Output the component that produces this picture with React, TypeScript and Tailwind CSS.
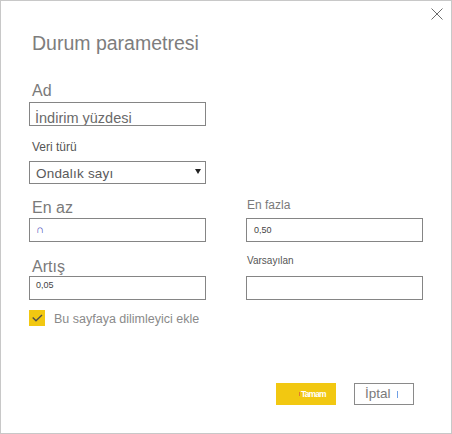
import React from 'react'

const font = "font-['Liberation_Sans',Arial,sans-serif]"

function CloseIcon() {
  return (
    <svg width="12" height="12" viewBox="0 0 12 12" fill="none" stroke="#6b6b6b" strokeWidth={1}>
      <path d="M0.5 0.5 L11.5 11.5 M11.5 0.5 L0.5 11.5" />
    </svg>
  )
}

function TextBox({ children, pad = 'pt-[6px]' }: { children?: React.ReactNode; pad?: string }) {
  return (
    <div className={`h-[24px] w-[177px] overflow-hidden border border-[#858585] bg-white pl-[6px] ${pad}`}>
      {children}
    </div>
  )
}

export default function App() {
  return (
    <div className={`relative h-[434px] w-[452px] border border-[#c8c8c8] bg-white pl-[28px] pt-[32px] ${font}`}>
      <button className="absolute right-[8px] top-[7px]">
        <CloseIcon />
      </button>

      <h1 className="pl-[3px] text-[19.5px] leading-[20px] text-[#7d7d7d]">Durum parametresi</h1>

      {/* Ad */}
      <div className="mt-[30px] pl-[3px] text-[16px] leading-[16px] text-[#7a7a7a]">Ad</div>
      <div className="mt-[3px] h-[24px] w-[177px] overflow-hidden border border-[#858585] pl-[5px] pt-[8px]">
        <span className="block text-[14.5px] leading-[14px] text-[#6a6a6a]">İndirim yüzdesi</span>
      </div>

      {/* Veri türü */}
      <div className="mt-[15px] pl-[3px] text-[12px] leading-[12px] text-[#555]">Veri türü</div>
      <div className="mt-[8px] flex h-[23px] w-[177px] items-start justify-between border border-[#858585] pl-[6px] pr-[4px]">
        <span className="mt-[5px] block text-[13.5px] leading-[13px] tracking-[0.2px] text-[#5a5a5a]">Ondalık sayı</span>
        <svg className="mt-[7px]" width="6" height="5" viewBox="0 0 6 5">
          <polygon points="0,0 6,0 3,5" fill="#222" />
        </svg>
      </div>

      {/* En az / En fazla */}
      <div className="grid grid-cols-[177px_177px] gap-x-[40px]">
        <div className="flex flex-col">
          <div className="mt-[16px] pl-[3px] text-[16px] leading-[16px] text-[#7a7a7a]">En az</div>
          <div className="mt-[2px]">
            <TextBox pad="pt-[5px]">
              <span className="block text-[11px] font-bold leading-[10px] text-[#3f3fb5]">∩</span>
            </TextBox>
          </div>
        </div>
        <div className="flex flex-col">
          <div className="mt-[15px] pl-[1px] text-[12px] leading-[12px] text-[#7a7a7a]">En fazla</div>
          <div className="mt-[7px]">
            <TextBox pad="pt-[6px] pl-[7px]">
              <span className="block text-[9px] leading-[10px] text-[#444]">0,50</span>
            </TextBox>
          </div>
        </div>
      </div>

      {/* Artış / Varsayılan */}
      <div className="grid grid-cols-[177px_177px] gap-x-[40px]">
        <div className="flex flex-col">
          <div className="mt-[17px] pl-[3px] text-[16px] leading-[16px] text-[#7a7a7a]">Artış</div>
          <div className="mt-[1px]">
            <TextBox pad="pt-[3px]">
              <span className="block text-[9px] leading-[10px] text-[#444]">0,05</span>
            </TextBox>
          </div>
        </div>
        <div className="flex flex-col">
          <div className="mt-[14px] pl-[1px] text-[10px] leading-[10px] text-[#555]">Varsayılan</div>
          <div className="mt-[10px]">
            <TextBox />
          </div>
        </div>
      </div>

      {/* checkbox */}
      <label className="mt-[10px] flex items-start">
        <span className="flex h-[16px] w-[16px] items-center justify-center bg-[#f2c811]">
          <svg width="16" height="16" viewBox="0 0 16 16" fill="none" stroke="#4d4d4d" strokeWidth={1.4}>
            <path d="M3.7 7.5 L7 10.7 L13 5" />
          </svg>
        </span>
        <span className="ml-[9px] mt-[3px] text-[12.5px] leading-[13px] text-[#8a8a8a]">Bu sayfaya dilimleyici ekle</span>
      </label>

      {/* buttons */}
      <div className="mt-[57px] flex justify-end gap-[18px] pr-[37px]">
        <button className="flex h-[22px] w-[60px] items-center bg-[#f2c811] pl-[23px]">
          <span className="h-[4px] w-[1px] bg-[#e07a2e]" />
          <span className="ml-[1px] text-[8.5px] font-semibold leading-[9px] tracking-[-0.9px] text-white">Tamam</span>
        </button>
        <button className="flex h-[22px] w-[60px] items-center border border-[#8a8a8a] pl-[10px]">
          <span className="text-[13.5px] leading-[14px] text-[#7a7a7a]">İptal</span>
          <span className="ml-[6px] h-[7px] w-[1px] bg-[#6fa0e6]" />
        </button>
      </div>
    </div>
  )
}
